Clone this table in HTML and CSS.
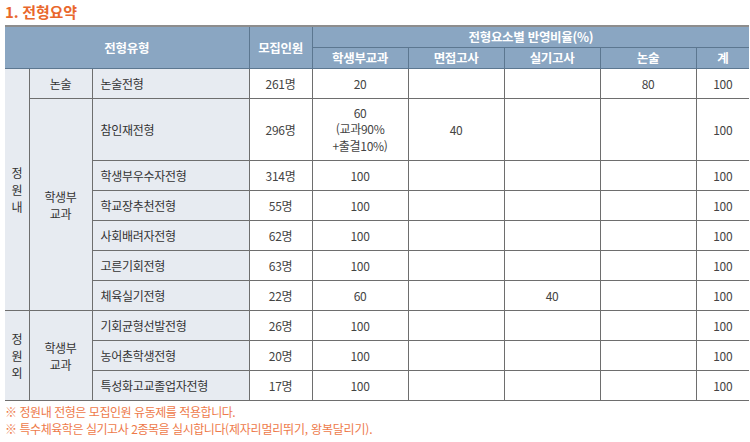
FILE: index.html
```html
<!DOCTYPE html>
<html lang="ko">
<head>
<meta charset="utf-8">
<link rel="stylesheet" href="styles.css">
</head>
<body>
<h2 class="title">1. 전형요약</h2>
<table class="summary">
  <colgroup>
    <col class="c1"><col class="c2"><col class="c3"><col class="c4">
    <col class="c5"><col class="c5"><col class="c5"><col class="c5"><col class="c9">
  </colgroup>
  <thead>
    <tr class="h1">
      <th colspan="3" rowspan="2">전형유형</th>
      <th rowspan="2">모집인원</th>
      <th colspan="5">전형요소별 반영비율(%)</th>
    </tr>
    <tr class="h2">
      <th>학생부교과</th><th>면접고사</th><th>실기고사</th><th>논술</th><th>계</th>
    </tr>
  </thead>
  <tbody>
    <tr>
      <td class="grp" rowspan="7">정<br>원<br>내</td>
      <td class="grp">논술</td>
      <td class="name">논술전형</td>
      <td>261명</td><td>20</td><td></td><td></td><td>80</td><td>100</td>
    </tr>
    <tr class="tall">
      <td class="grp" rowspan="6">학생부<br>교과</td>
      <td class="name">참인재전형</td>
      <td>296명</td><td class="multi">60<br>(교과90%<br>+출결10%)</td><td>40</td><td></td><td></td><td>100</td>
    </tr>
    <tr><td class="name">학생부우수자전형</td><td>314명</td><td>100</td><td></td><td></td><td></td><td>100</td></tr>
    <tr><td class="name">학교장추천전형</td><td>55명</td><td>100</td><td></td><td></td><td></td><td>100</td></tr>
    <tr><td class="name">사회배려자전형</td><td>62명</td><td>100</td><td></td><td></td><td></td><td>100</td></tr>
    <tr><td class="name">고른기회전형</td><td>63명</td><td>100</td><td></td><td></td><td></td><td>100</td></tr>
    <tr><td class="name">체육실기전형</td><td>22명</td><td>60</td><td></td><td>40</td><td></td><td>100</td></tr>
    <tr>
      <td class="grp" rowspan="3">정<br>원<br>외</td>
      <td class="grp" rowspan="3">학생부<br>교과</td>
      <td class="name">기회균형선발전형</td>
      <td>26명</td><td>100</td><td></td><td></td><td></td><td>100</td>
    </tr>
    <tr><td class="name">농어촌학생전형</td><td>20명</td><td>100</td><td></td><td></td><td></td><td>100</td></tr>
    <tr><td class="name">특성화고교졸업자전형</td><td>17명</td><td>100</td><td></td><td></td><td></td><td>100</td></tr>
  </tbody>
</table>
<p class="note">※ 정원내 전형은 모집인원 유동제를 적용합니다.</p>
<p class="note">※ 특수체육학은 실기고사 2종목을 실시합니다<span class="wide">(제자리멀리뛰기, 왕복달리기).</span></p>
</body>
</html>
```

FILE: styles.css
```css
html, body {
  margin: 0;
  padding: 0;
  background: #fff;
}
body {
  padding: 3px 2px 0 5px;
  font-family: "Noto Sans CJK KR", "Noto Sans", sans-serif;
  color: #3a3a3a;
}
.title {
  margin: 0 0 4px 0;
  font-size: 15px;
  line-height: 18px;
  font-weight: 700;
  color: #e9672c;
  letter-spacing: -0.2px;
}
.summary {
  width: 743px;
  table-layout: fixed;
  border-collapse: collapse;
  font-size: 12px;
  letter-spacing: -0.3px;
  border-top: 2px solid #8d8d8d;
}
.c1 { width: 24px; }
.c2 { width: 63px; }
.c3 { width: 157px; }
.c4 { width: 63px; }
.c5 { width: 96px; }
.c9 { width: 53px; }
.summary th {
  background: #8aa6c2;
  color: #fff;
  font-weight: 700;
  font-size: 12.5px;
  border: 1.5px solid #5c7790;
  padding: 0;
  line-height: 16px;
}
.summary th:first-child { border-left: none; }
.summary tr th:last-child { border-right: none; }
.h1 th { height: 20px; }
.h2 th { height: 20px; }
.summary td {
  border: 1.5px solid #6e6e6e;
  text-align: center;
  padding: 0;
  height: 29px;
  line-height: 15px;
  color: #444;
}
.summary tr td:last-child { border-right: none; }
.summary td:first-child { border-left: none; }
.summary td.grp {
  background: #e7ebf1;
  color: #333;
  line-height: 17px;
}
.summary td.name {
  background: #e7ebf1;
  text-align: left;
  padding-left: 8px;
  color: #333;
}
.summary tr.tall td { height: 61px; }
.summary td.multi { line-height: 16.5px; }
.note {
  margin: 1px 0 0 0;
  font-size: 12px;
  line-height: 16px;
  letter-spacing: -0.45px;
  color: #ee7a4a;
}
.note .wide { letter-spacing: -0.2px; }
.summary + .note { margin-top: 3px; }
```
